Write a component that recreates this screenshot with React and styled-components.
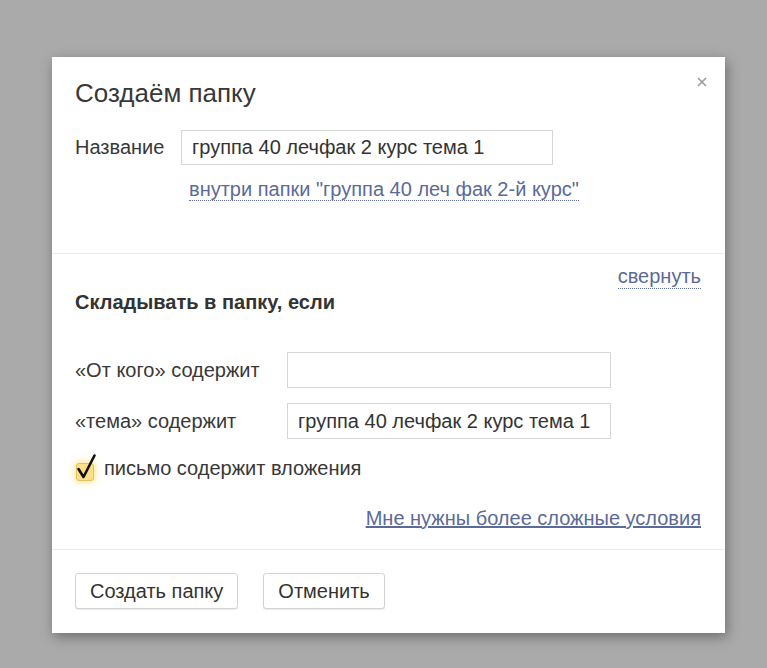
import styled, { createGlobalStyle } from "styled-components"

const Global = createGlobalStyle`
  body {
    margin: 0;
    background: #aaaaaa;
    font-family: "Liberation Sans", Arial, sans-serif;
    color: #333;
  }
`

const Page = styled.div`
  width: 767px;
  height: 668px;
  padding: 57px 0 0 52px;
  box-sizing: border-box;
`

const Modal = styled.div`
  position: relative;
  width: 673px;
  background: #fff;
  box-shadow: 2px 4px 12px rgba(0, 0, 0, 0.35);
`

const Close = styled.button`
  position: absolute;
  top: 16px;
  right: 14px;
  border: 0;
  background: none;
  padding: 4px;
  cursor: pointer;
  line-height: 0;
`

const Section = styled.div`
  padding: ${p => p.$pad};
  border-top: ${p => (p.$divider ? "1px solid #ececec" : "none")};
`

const Title = styled.h2`
  margin: 0 0 22px;
  font-size: 26px;
  line-height: 30px;
  font-weight: normal;
  color: #383838;
`

const Row = styled.div`
  display: flex;
  align-items: center;
  margin-bottom: ${p => p.$gap || 0}px;
`

const Label = styled.label`
  width: ${p => p.$w}px;
  font-size: 20px;
  color: #383838;
  flex-shrink: 0;
`

const Input = styled.input`
  width: ${p => p.$w}px;
  height: ${p => p.$h || 35}px;
  box-sizing: border-box;
  border: 1px solid #d6d6d6;
  padding: 0 10px;
  font-family: inherit;
  font-size: 20px;
  color: #333;
  outline: none;
`

const DottedLink = styled.a`
  font-size: 20px;
  line-height: 23px;
  color: #5b6a98;
  text-decoration: none;
  border-bottom: 1px dotted #5b6a98;
  cursor: pointer;
`

const UnderLink = styled.a`
  font-size: 20px;
  line-height: 23px;
  color: #5b6a98;
  text-decoration: underline;
  cursor: pointer;
`

const Indent = styled.div`
  padding-left: ${p => p.$left}px;
`

const SubHead = styled.div`
  display: flex;
  justify-content: space-between;
  align-items: flex-start;
`

const Bold = styled.h3`
  margin: 26px 0 0;
  font-size: 20px;
  line-height: 23px;
  font-weight: bold;
  color: #333;
`

const Spacer = styled.div`
  height: ${p => p.$h}px;
`

const Check = styled.label`
  display: flex;
  align-items: center;
  gap: 10px;
  height: 23px;
  margin-top: 18px;
  font-size: 20px;
  color: #383838;
  cursor: pointer;
`

const Box = styled.span`
  position: relative;
  width: 16px;
  height: 16px;
  margin-left: 1px;
  margin-top: 6px;
  border-radius: 3px;
  background: #fbe08a;
  border: 1px solid #e2c15e;
  box-shadow: 0 0 6px 2px rgba(255, 206, 50, 0.45);
  svg {
    position: absolute;
    left: -2px;
    top: -11px;
  }
`

const Right = styled.div`
  display: flex;
  justify-content: flex-end;
  margin-top: ${p => p.$top}px;
`

const Buttons = styled.div`
  display: flex;
  gap: 25px;
`

const Button = styled.button`
  height: 36px;
  padding: 0 14px;
  background: #fff;
  border: 1px solid #d3d3d3;
  border-radius: 3px;
  box-shadow: 0 1px 1px rgba(0, 0, 0, 0.08);
  font-family: inherit;
  font-size: 20px;
  color: #333;
  cursor: pointer;
`

export default function App() {
  return (
    <Page>
      <Global />
      <Modal>
        <Close aria-label="close">
          <svg width="10" height="10" viewBox="0 0 10 10">
            <path d="M1 1L9 9M9 1L1 9" stroke="#9a9a9a" strokeWidth="1.6" />
          </svg>
        </Close>

        <Section $pad="21px 23px 52px">
          <Title>Создаём папку</Title>
          <Row $gap={13}>
            <Label $w={106}>Название</Label>
            <Input $w={372} defaultValue="группа 40 лечфак 2 курс тема 1" />
          </Row>
          <Indent $left={114}>
            <DottedLink>внутри папки "группа 40 леч фак 2-й курс"</DottedLink>
          </Indent>
        </Section>

        <Section $divider $pad="11px 24px 19px 23px">
          <SubHead>
            <Bold>Складывать в папку, если</Bold>
            <DottedLink>свернуть</DottedLink>
          </SubHead>
          <Spacer $h={38} />
          <Row $gap={15}>
            <Label $w={212}>«От кого» содержит</Label>
            <Input $w={324} $h={36} />
          </Row>
          <Row>
            <Label $w={212}>«тема» содержит</Label>
            <Input $w={324} $h={36} defaultValue="группа 40 лечфак 2 курс тема 1" />
          </Row>
          <Check>
            <Box>
              <svg width="24" height="28" viewBox="0 0 24 28">
                <path d="M3.5 16L8.5 24L19.5 2.5" stroke="#111" strokeWidth="2.6" fill="none" strokeLinejoin="round" strokeLinecap="round" />
              </svg>
            </Box>
            письмо содержит вложения
          </Check>
          <Right $top={27}>
            <UnderLink>Мне нужны более сложные условия</UnderLink>
          </Right>
        </Section>

        <Section $divider $pad="23px 24px 24px 23px">
          <Buttons>
            <Button>Создать папку</Button>
            <Button>Отменить</Button>
          </Buttons>
        </Section>
      </Modal>
    </Page>
  )
}
